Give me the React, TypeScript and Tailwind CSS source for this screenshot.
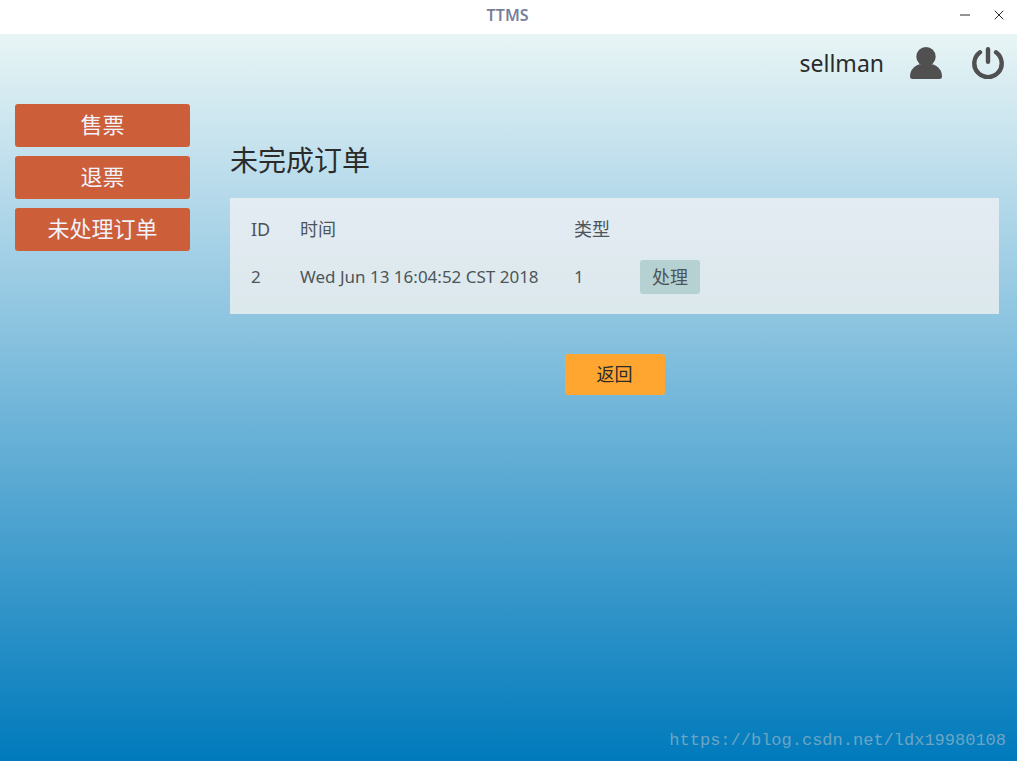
import { Minus, X } from 'lucide-react';

interface Order {
  id: number;
  time: string;
  type: number;
}

const menu = ['售票', '退票', '未处理订单'];

const orders: Order[] = [
  { id: 2, time: 'Wed Jun 13 16:04:52 CST 2018', type: 1 },
];

function UserIcon() {
  return (
    <svg viewBox="0 0 32 32" className="w-8 h-8" fill="#505050" aria-hidden="true">
      <circle cx="16" cy="9.700" r="9.700" />
      <path d="M9.500 17.300C4 18.700 0 23.500 0 29.500C0 31.200 1 32 2.500 32H29.500C31 32 32 31.200 32 29.500C32 23.500 28 18.700 22.500 17.300Z" />
    </svg>
  );
}

function PowerIcon() {
  return (
    <svg viewBox="0 0 32 32" className="w-8 h-8" fill="none" stroke="#505050" strokeWidth="4.400" strokeLinecap="round" aria-hidden="true">
      <path d="M16 2.200V14.800" />
      <path d="M8 5.300A13.700 13.700 0 1 0 24 5.300" />
    </svg>
  );
}

export default function App() {
  return (
    <div className="min-h-screen flex flex-col bg-white font-['Noto_Sans','Noto_Sans_CJK_SC',sans-serif] text-[#2b2b2b]">
      {/* Title bar */}
      <header className="h-[34px] grid grid-cols-[1fr_auto_1fr] items-center pl-2 pr-2.5">
        <h1 className="col-start-2 pb-1 text-base leading-6 font-semibold text-[#77809a]">TTMS</h1>
        <div className="flex justify-end gap-[18px] pb-1">
          <button aria-label="Minimize" className="w-4 h-4 flex items-center justify-center"><Minus size={18} strokeWidth={1.500} /></button>
          <button aria-label="Close" className="w-4 h-4 flex items-center justify-center"><X size={16} strokeWidth={1.500} /></button>
        </div>
      </header>

      <div className="flex-1 flex flex-col bg-[linear-gradient(#e8f5f5,#b8dbeb_21%,#007abc)]">
        <div className="h-[60px] flex justify-end items-center px-[13px] pb-0.5">
          <span className="text-[23px] leading-8">sellman</span>
          <button aria-label="User" className="ml-[26px]"><UserIcon /></button>
          <button aria-label="Log out" className="ml-[30px]"><PowerIcon /></button>
        </div>

        <div className="flex-1 flex pl-[15px] pr-[18px]">
          <nav className="w-[175px] shrink-0 flex flex-col gap-[9px] pt-[10px]">
            {menu.map(item => (
              <button key={item} className="h-[43px] pb-1 rounded-[3px] bg-[#cc5e3a] text-[22px] leading-8 text-[#f2f2fa]">
                {item}
              </button>
            ))}
          </nav>

          <main className="flex-1 min-w-0 ml-10 pt-[46px] flex flex-col">
            <h2 className="text-[28px] leading-10">未完成订单</h2>

            <section className="mt-[18px] px-[21px] pt-[7px] pb-[13px] bg-linear-to-b from-[#e4ecf3] to-[#dbe8ec]">
              <table className="w-full table-fixed text-left text-[17px] leading-6 text-[#4d5559]">
                <thead>
                  <tr className="h-12 text-lg leading-6">
                    <th className="w-[49px] font-normal">ID</th>
                    <th className="w-[274px] font-normal">时间</th>
                    <th className="w-[66px] font-normal">类型</th>
                    <td />
                  </tr>
                </thead>
                <tbody>
                  {orders.map(o => (
                    <tr key={o.id} className="h-12">
                      <td>{o.id}</td>
                      <td className="whitespace-nowrap">{o.time}</td>
                      <td>{o.type}</td>
                      <td>
                        <button className="block w-[60px] h-[34px] rounded-[3px] bg-[#b6d1d1] text-lg leading-6">处理</button>
                      </td>
                    </tr>
                  ))}
                </tbody>
              </table>
            </section>

            <button className="self-center mt-10 w-[100px] h-[41px] pb-0.5 rounded-[3px] bg-[#ffa630] text-lg leading-6">返回</button>
          </main>
        </div>

        <footer className="flex justify-end pr-[11px] pb-2">
          <a href="https://blog.csdn.net/ldx19980108" className="font-['Liberation_Mono',monospace] text-[17px] leading-6 text-[#6ba5c4]">
            https://blog.csdn.net/ldx19980108
          </a>
        </footer>
      </div>
    </div>
  );
}
